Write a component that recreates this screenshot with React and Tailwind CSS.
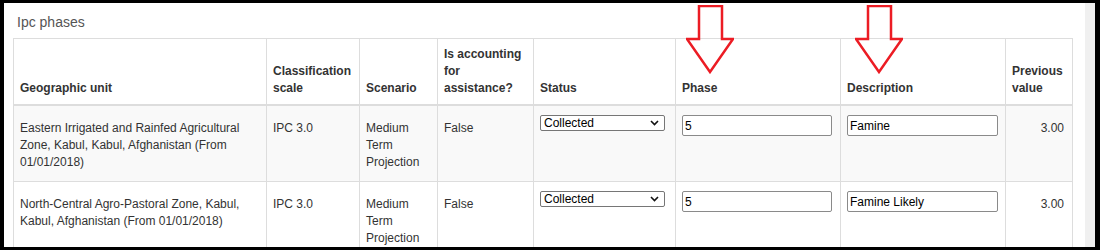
import React from 'react';

const rows = [
  {
    unit: ['Eastern Irrigated and Rainfed Agricultural', 'Zone, Kabul, Kabul, Afghanistan (From', '01/01/2018)'],
    description: 'Famine',
    striped: true,
  },
  {
    unit: ['North-Central Agro-Pastoral Zone, Kabul,', 'Kabul, Afghanistan (From 01/01/2018)'],
    description: 'Famine Likely',
    striped: false,
  },
];

function DownArrow({ className }) {
  return (
    <svg width="48" height="69" viewBox="0 0 48 69" className={className}>
      <polygon
        points="13,1 36,1 36,34 47,34 24,67 1,34 13,34"
        fill="none"
        stroke="#ec1c24"
        strokeWidth="2.5"
      />
    </svg>
  );
}

function Lines({ lines }) {
  return lines.map((l, i) => (
    <div key={i} className="whitespace-nowrap">
      {l}
    </div>
  ));
}

export default function App() {
  const th = 'border border-[#ddd] border-b-2 pl-[6px] pr-2 pt-[7px] pb-[7px] align-bottom text-left font-bold';
  const td = 'border border-[#ddd] pl-[6px] pr-2 pt-[14px] pb-[10px] align-top';
  const tdInput = 'border border-[#ddd] pl-[6px] pr-2 pt-[8px] pb-[10px] align-top';

  return (
    <div className="w-[1100px] h-[250px] bg-black pt-[3px] pl-[4px] pr-[5px] pb-[3px] overflow-hidden">
      <div className="flex h-full">
        <div
          className="relative flex-1 bg-white overflow-hidden text-[#333] text-[12px] leading-[17px]"
          style={{ fontFamily: '"Liberation Sans", Arial, sans-serif' }}
        >
          <div className="pl-[13px] pt-[9px] text-[14px] leading-[20px] text-[#555]">Ipc phases</div>

          <table className="ml-[9px] mt-[6px] w-[1059px] table-fixed border-collapse">
            <colgroup>
              <col className="w-[253px]" />
              <col className="w-[93px]" />
              <col className="w-[78px]" />
              <col className="w-[96px]" />
              <col className="w-[142px]" />
              <col className="w-[165px]" />
              <col className="w-[165px]" />
              <col className="w-[67px]" />
            </colgroup>
            <thead>
              <tr className="bg-white">
                <th className={th}>Geographic unit</th>
                <th className={th}>
                  Classification
                  <br />
                  scale
                </th>
                <th className={th}>Scenario</th>
                <th className={th}>
                  Is accounting
                  <br />
                  for
                  <br />
                  assistance?
                </th>
                <th className={th}>Status</th>
                <th className={th}>Phase</th>
                <th className={th}>Description</th>
                <th className={th}>
                  Previous
                  <br />
                  value
                </th>
              </tr>
            </thead>
            <tbody>
              {rows.map((r, i) => (
                <tr key={i} className={r.striped ? 'bg-[#f9f9f9]' : 'bg-white'}>
                  <td className={td}>
                    <Lines lines={r.unit} />
                  </td>
                  <td className={td}>IPC 3.0</td>
                  <td className={td}>
                    <Lines lines={['Medium', 'Term', 'Projection']} />
                  </td>
                  <td className={td}>False</td>
                  <td className={tdInput}>
                    <div className="relative mt-[1px] w-[125px] h-[16px]">
                      <select
                        defaultValue="Collected"
                        className="appearance-none block w-full h-full bg-white border border-[#767676] rounded-[2px] pl-[3px] text-[12px] leading-[14px] text-black"
                      >
                        <option>Collected</option>
                        <option>Not collected</option>
                      </select>
                      <svg
                        width="9"
                        height="6"
                        viewBox="0 0 9 6"
                        className="absolute right-[6px] top-[5px] pointer-events-none"
                      >
                        <path d="M1 1 L4.5 4.5 L8 1" fill="none" stroke="#111" strokeWidth="1.6" />
                      </svg>
                    </div>
                  </td>
                  <td className={tdInput}>
                    <input
                      defaultValue="5"
                      className="mt-[1px] block w-[150px] h-[21px] bg-white border border-[#8a8a8a] rounded-[2px] px-[2px] text-[12px] text-black"
                    />
                  </td>
                  <td className={tdInput}>
                    <input
                      defaultValue={r.description}
                      className="mt-[1px] block w-[151px] h-[21px] bg-white border border-[#8a8a8a] rounded-[2px] px-[2px] text-[12px] text-black"
                    />
                  </td>
                  <td className={td + ' text-right'}>3.00</td>
                </tr>
              ))}
            </tbody>
          </table>

          <DownArrow className="absolute left-[682px] top-[2px]" />
          <DownArrow className="absolute left-[851px] top-[2px]" />
        </div>
        <div className="w-[10px] h-full bg-[#f0f0f0]" />
      </div>
    </div>
  );
}
